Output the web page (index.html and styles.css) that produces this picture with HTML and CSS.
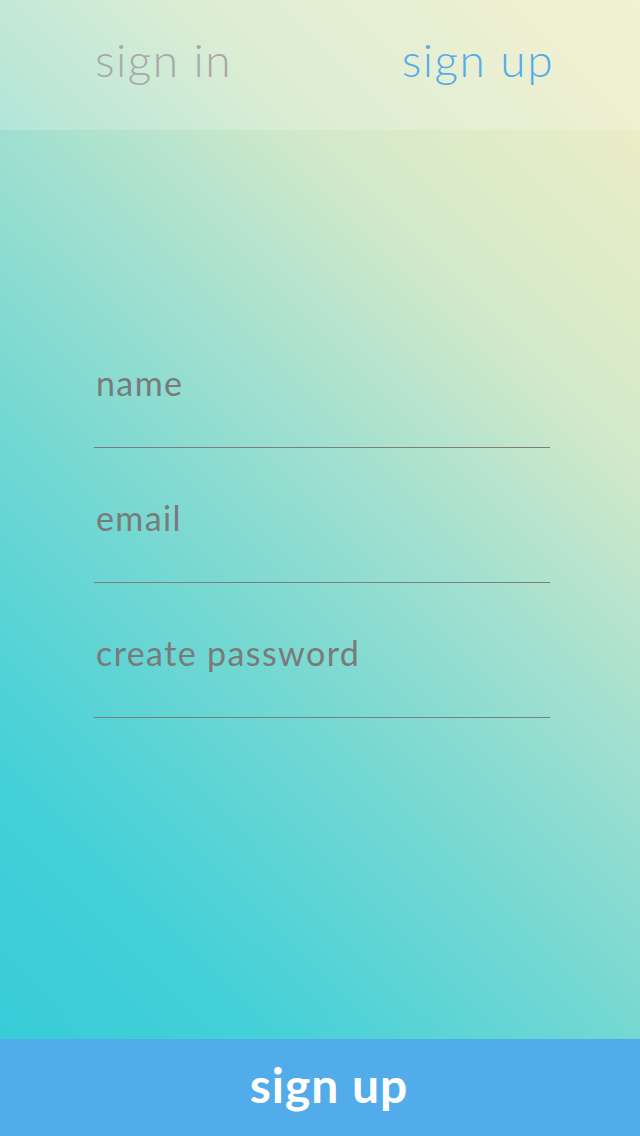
FILE: index.html
```html
<!DOCTYPE html>
<html>
<head>
<meta charset="utf-8">
<link rel="stylesheet" href="styles.css">
</head>
<body>
<div class="screen">
  <header class="tabs">
    <span class="tab tab-muted">sign in</span>
    <span class="tab tab-active">sign up</span>
  </header>
  <main class="form">
    <div class="field"><span class="label">name</span></div>
    <div class="field"><span class="label">email</span></div>
    <div class="field"><span class="label">create password</span></div>
  </main>
  <button class="submit">sign up</button>
</div>
</body>
</html>
```
FILE: styles.css
```css
html, body {
  margin: 0;
  padding: 0;
}
body {
  font-family: Lato, "Open Sans", sans-serif;
}
.screen {
  width: 640px;
  height: 1136px;
  display: flex;
  flex-direction: column;
  background: linear-gradient(45deg,
    #36ccd8 5%,
    #45d0d8 21%,
    #74d8d2 41%,
    #9ddfd0 56%,
    #d3e9c9 74%,
    #eaedc6 92%,
    #eeeec8 100%);
  overflow: hidden;
}
.tabs {
  height: 130px;
  flex: none;
  display: flex;
  justify-content: space-between;
  align-items: center;
  padding: 0 86px 12px 95px;
  box-sizing: border-box;
  background: rgba(255, 255, 255, 0.2);
}
.tab {
  font-size: 46px;
  font-weight: 300;
  letter-spacing: 1.5px;
}
.tab-muted { color: #a8a8a8; }
.tab-active { color: #55acea; }
.form {
  flex: 1;
  display: flex;
  flex-direction: column;
  gap: 50px;
  padding: 233px 90px 0 94px;
}
.field {
  border-bottom: 1px solid #7d7f7e;
  padding-left: 2px;
  height: 84px;
  display: flex;
  align-items: flex-start;
}
.label {
  font-size: 34px;
  line-height: 40px;
  color: #7a7a7a;
  letter-spacing: 1.4px;
}
.submit {
  flex: none;
  height: 97px;
  border: none;
  margin: 0;
  background: #52acea;
  color: #fff;
  font-family: Lato, "Open Sans", sans-serif;
  font-weight: 700;
  font-size: 48px;
  letter-spacing: 1px;
  padding: 0 0 6px 18px;
}
```
